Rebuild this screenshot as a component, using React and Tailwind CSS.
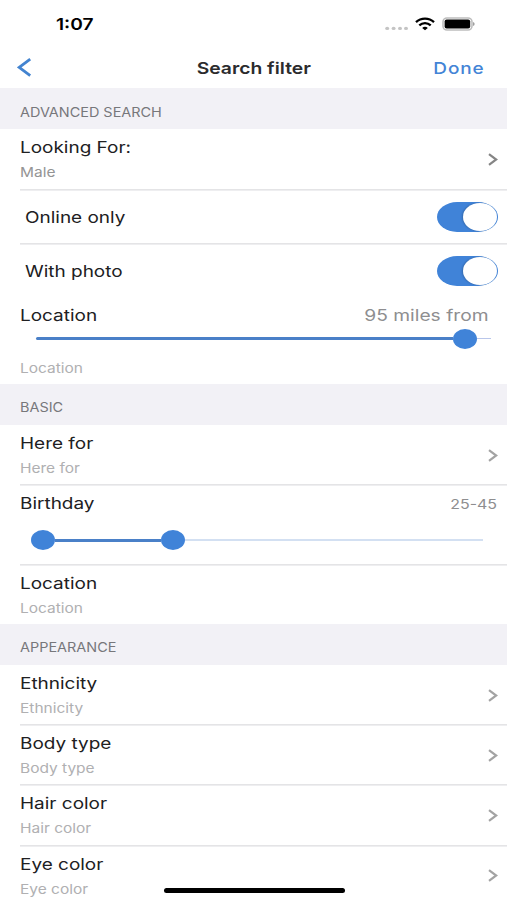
import React, { useState } from 'react';
import clsx from 'clsx';

const appearance = ['Ethnicity', 'Body type', 'Hair color', 'Eye color'];

function Wide({ origin = 'origin-left', scale = 'scale-x-[1.185]', className, children }) {
  return (
    <span className={clsx('block w-fit whitespace-nowrap', origin, scale, className)}>
      {children}
    </span>
  );
}

function StatusBar() {
  return (
    <div className="flex h-12 shrink-0 items-center pl-[56px] pr-[32px]">
      <Wide scale="scale-x-[1.16]" className="text-[16.5px] font-semibold text-black">1:07</Wide>
      <div className="ml-auto flex items-center">
        <svg width="23" height="14" viewBox="0 0 23 14" fill="#c4c4c4">
          <ellipse cx="2.2" cy="11.4" rx="2" ry="1.7" />
          <ellipse cx="8.6" cy="11.4" rx="2" ry="1.7" />
          <ellipse cx="15" cy="11.4" rx="2" ry="1.7" />
          <ellipse cx="21" cy="11.4" rx="2" ry="1.7" />
        </svg>
        <svg className="ml-[7px]" width="20" height="14" viewBox="0 0 20 14" fill="none" stroke="#000" strokeWidth="2.3">
          <path d="M1 5.2C6 .4 14 .4 19 5.2" />
          <path d="M4.3 8.4c3.3-3 8.1-3 11.4 0" />
          <path d="M10 13.2 7.2 10.9c1.6-1.4 4-1.4 5.6 0Z" fill="#000" stroke="none" />
        </svg>
        <svg className="ml-[7px]" width="33" height="14" viewBox="0 0 33 14">
          <rect x="1" y="1" width="29" height="12" rx="4" fill="#fff" stroke="#bdbdbd" strokeWidth="1.6" />
          <rect x="2.6" y="2.5" width="25.6" height="9" rx="2" fill="#000" />
          <path d="M31.2 5v4c1.8-.6 1.8-3.4 0-4Z" fill="#8a8a8a" />
        </svg>
      </div>
    </div>
  );
}

function NavBar() {
  return (
    <div className="grid h-10 shrink-0 grid-cols-[1fr_auto_1fr] items-center px-[22px]">
      <svg className="-ml-[5px]" width="15" height="20" viewBox="0 0 15 20" fill="none" stroke="#4384d0" strokeWidth="2.8">
        <path d="M13.2 1.2 2.2 9.4l11 8.2" />
      </svg>
      <Wide origin="origin-center" scale="scale-x-[1.17]" className="text-[16.5px] font-semibold text-[#2b2b2d]">
        Search filter
      </Wide>
      <Wide origin="origin-right" scale="scale-x-[1.15]" className="justify-self-end text-[16.5px] font-medium tracking-[0.8px] text-[#4384d6]">
        Done
      </Wide>
    </div>
  );
}

function SectionHeader({ title, className = 'pt-[6px]' }) {
  return (
    <div className={clsx('flex h-[41px] shrink-0 items-center bg-[#f2f1f6] pl-5', className)}>
      <Wide scale="scale-x-[1.11]" className="text-[13px] text-[#77777b]">{title}</Wide>
    </div>
  );
}

function Chevron({ dark }) {
  return (
    <svg width="10" height="13" viewBox="0 0 10 13" fill="none" stroke={dark ? '#858585' : '#a3a3a3'} strokeWidth="2.2">
      <path d="m1 1.2 7.2 5.3L1 11.8" />
    </svg>
  );
}

const divider = 'border-b border-[#e4e4e6] shadow-[0_1px_0_#eeeef0]';

function Row({ title, value, active, arrow = true, last, className = 'h-[60px]' }) {
  return (
    <div className={clsx('ml-5 flex shrink-0 items-start pr-[9px]', !last && divider, className)}>
      <div className="flex-1 pt-1.5">
        <Wide className="text-[16px] leading-6 text-[#202022]">{title}</Wide>
        <Wide scale="scale-x-[1.165]" className={clsx('text-[13.3px] leading-[26px]', active ? 'text-[#949494]' : 'text-[#b0b0b2]')}>
          {value}
        </Wide>
      </div>
      {arrow && (
        <div className="self-center pt-px">
          <Chevron dark={active} />
        </div>
      )}
    </div>
  );
}

function SwitchRow({ label, last }) {
  const [on, setOn] = useState(true);
  return (
    <div className={clsx('ml-5 flex h-[54px] shrink-0 items-center justify-between pl-[4.5px] pr-[9px]', !last && divider)}>
      <Wide className="text-[16px] text-[#202022]">{label}</Wide>
      <button
        onClick={() => setOn(!on)}
        className={clsx('flex h-[30px] w-[61px] items-center rounded-[20px/15px] px-[1.5px]', on ? 'justify-end bg-[#4083d8]' : 'bg-gray-300')}
      >
        <span className="h-[28px] w-[34px] rounded-[50%] bg-white shadow-[-1px_0_2px_rgba(0,0,0,0.2)]"></span>
      </button>
    </div>
  );
}

function Thumb() {
  return <span className="h-5 w-6 shrink-0 rounded-[50%] bg-[#4083d8]"></span>;
}

export default function App() {
  return (
    <div className="relative flex h-[900px] w-[507px] flex-col overflow-hidden bg-white font-['Inter',sans-serif]">
      <StatusBar />
      <NavBar />

      <SectionHeader title="ADVANCED SEARCH" className="pt-[8px]" />
      <Row title="Looking For:" value="Male" active className="h-[61px]" />
      <SwitchRow label="Online only" />
      <SwitchRow label="With photo" last />
      <div className="h-[86px] shrink-0 pl-5 pt-[5px]">
        <div className="flex justify-between pr-[19px]">
          <Wide className="text-[16px] leading-6 text-[#202022]">Location</Wide>
          <Wide origin="origin-right" scale="scale-x-[1.2]" className="text-[16px] leading-6 text-[#8e8e90]">
            95 miles from
          </Wide>
        </div>
        <div className="ml-4 mr-4 flex h-[23px] items-center">
          <span className="h-[3px] flex-1 rounded-l-full bg-[#4a80c8]"></span>
          <Thumb />
          <span className="h-px w-[14px] bg-[#b9c6ea]"></span>
        </div>
        <Wide scale="scale-x-[1.165]" className="pt-[5px] text-[13.3px] leading-[26px] text-[#b0b0b2]">Location</Wide>
      </div>

      <SectionHeader title="BASIC" />
      <Row title="Here for" value="Here for" />
      <div className={clsx('ml-5 h-[80px] shrink-0 pt-1.5', divider)}>
        <div className="flex justify-between pr-[10px]">
          <Wide className="text-[16px] leading-6 text-[#202022]">Birthday</Wide>
          <Wide origin="origin-right" scale="scale-x-[1.2]" className="text-[13.3px] leading-[26px] text-[#8e8e90]">
            25-45
          </Wide>
        </div>
        <div className="ml-[11px] mr-6 flex h-[46px] items-center">
          <Thumb />
          <span className="h-[3px] w-[106px] bg-[#4a80c8]"></span>
          <Thumb />
          <span className="h-[2px] flex-1 bg-[#d3e0f2]"></span>
        </div>
      </div>
      <Row title="Location" value="Location" arrow={false} last className="h-[59px]" />

      <SectionHeader title="APPEARANCE" />
      {appearance.map((item) => (
        <Row key={item} title={item} value={item} className="h-[60.2px]" />
      ))}

      {/* Home indicator */}
      <div className="absolute bottom-[7.5px] left-[163.5px] h-[5px] w-[181px] rounded-full bg-black"></div>
    </div>
  );
}
